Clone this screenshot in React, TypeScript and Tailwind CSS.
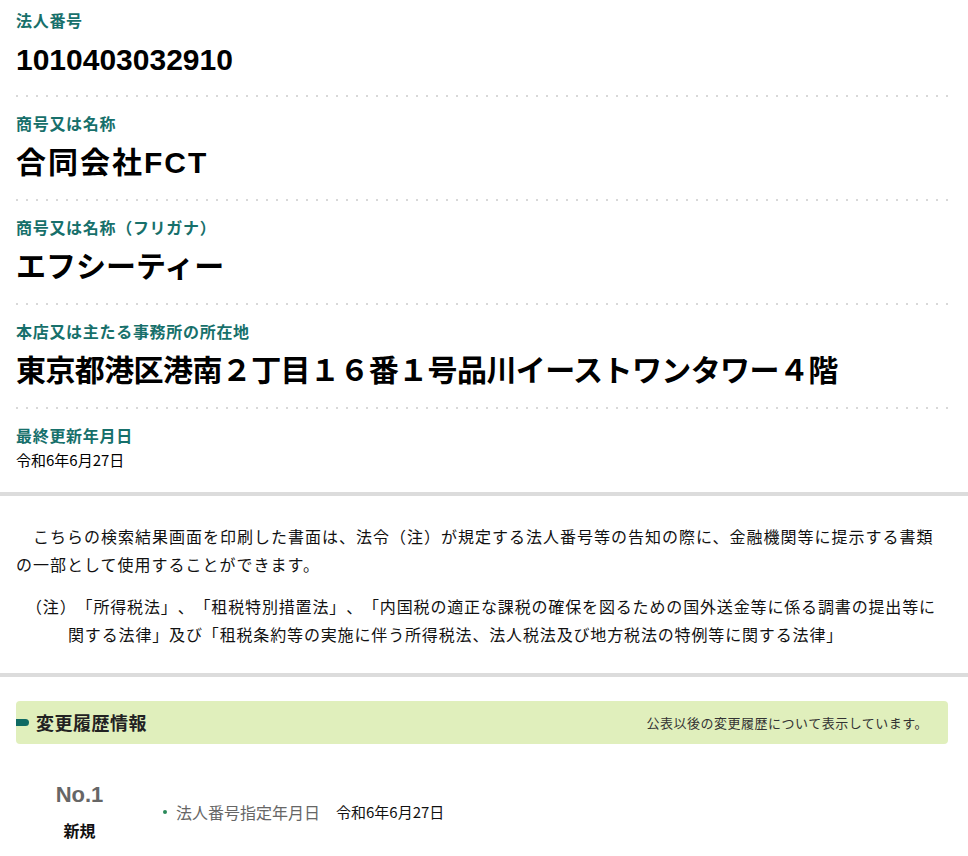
import React from "react";

const LABEL =
  "text-[16px] leading-[24px] font-bold text-[#17706b] tracking-[0.7px] [text-spacing-trim:space-all]";
const VALUE = "mt-[4px] text-[30px] leading-[44px] font-bold text-black whitespace-nowrap";

function Dots() {
  return (
    <div className="h-[2px] bg-[linear-gradient(to_right,#d8d8d8_2px,transparent_2px)] bg-[length:10px_2px] bg-repeat-x" />
  );
}

function Field({
  label,
  value,
  first,
  valueClass,
}: {
  label: string;
  value: string;
  first?: boolean;
  valueClass?: string;
}) {
  return (
    <div>
      <div className={first ? "pt-[10px] pb-[13px]" : "pt-[16px] pb-[14px]"}>
        <div className={LABEL}>{label}</div>
        <div className={VALUE + " " + (valueClass ?? "")}>{value}</div>
      </div>
      <Dots />
    </div>
  );
}

export default function App() {
  return (
    <div className="w-[968px] min-h-[856px] bg-white font-['Liberation_Sans','Noto_Sans_CJK_JP',sans-serif] text-black">
      <div className="pl-4 pr-5">
        <Field first label="法人番号" value="1010403032910" />
        <Field label="商号又は名称" value="合同会社FCT" valueClass="tracking-[2px]" />
        <Field
          label="商号又は名称（フリガナ）"
          value="エフシーティー"
          valueClass="text-[27px]"
        />
        <Field
          label="本店又は主たる事務所の所在地"
          value="東京都港区港南２丁目１６番１号品川イーストワンタワー４階"
          valueClass="text-[28px] tracking-[-0.6px]"
        />
        <div className="pt-[16px] pb-[22px]">
          <div className={LABEL}>最終更新年月日</div>
          <div className="mt-[1px] text-[15px] leading-[20px] font-['Noto_Sans_CJK_JP',sans-serif]">
            令和6年6月27日
          </div>
        </div>
      </div>

      <div className="h-[4px] bg-[#dcdcdc]" />

      <div className="pl-4 pr-5 pt-[26px] pb-[25px] font-['Noto_Sans_CJK_JP',sans-serif] text-[16px] leading-[28px] text-[#111] whitespace-nowrap [text-spacing-trim:space-all]">
        <p className="indent-[17px] tracking-[1px]">
          こちらの検索結果画面を印刷した書面は、法令（注）が規定する法人番号等の告知の際に、金融機関等に提示する書類
          <br />
          の一部として使用することができます。
        </p>
        <p className="mt-[14px] pl-[52px] -indent-[42px] tracking-[0.85px]">
          （注）「所得税法」、「租税特別措置法」、「内国税の適正な課税の確保を図るための国外送金等に係る調書の提出等に
          <br />
          関する法律」及び「租税条約等の実施に伴う所得税法、法人税法及び地方税法の特例等に関する法律」
        </p>
      </div>

      <div className="h-[4px] bg-[#dcdcdc]" />

      <div className="pl-4 pr-5 pt-[24px]">
        <div className="h-[43px] rounded-[4px] bg-[#e0efbc] flex items-center justify-between pr-[20px]">
          <div className="flex items-center">
            <span className="block w-[13px] h-[7px] rounded-r-full bg-[#0f6a63]" />
            <span className="ml-[7px] text-[18px] font-bold text-[#222] font-['Noto_Sans_CJK_JP',sans-serif] tracking-[0.5px]">
              変更履歴情報
            </span>
          </div>
          <span className="text-[13px] text-[#333] font-['Noto_Sans_CJK_JP',sans-serif] tracking-[0.5px]">
            公表以後の変更履歴について表示しています。
          </span>
        </div>

        <div className="flex pt-[37px]">
          <div className="w-[127px] flex flex-col items-center">
            <div className="text-[22px] leading-[28px] font-bold text-[#666]">No.1</div>
            <div className="mt-[9px] text-[16px] leading-[24px] font-bold text-[#111] font-['Noto_Sans_CJK_JP',sans-serif]">
              新規
            </div>
          </div>
          <ul className="mt-[19px] ml-[20px]">
            <li className="flex items-center text-[16px] leading-[24px] font-['Noto_Sans_CJK_JP',sans-serif]">
              <span className="block w-[4px] h-[4px] rounded-full bg-[#2a8a5a] mr-[9px]" />
              <span className="text-[#666]">法人番号指定年月日</span>
              <span className="ml-[16px] text-[#111] text-[15px]">令和6年6月27日</span>
            </li>
          </ul>
        </div>
      </div>
    </div>
  );
}
